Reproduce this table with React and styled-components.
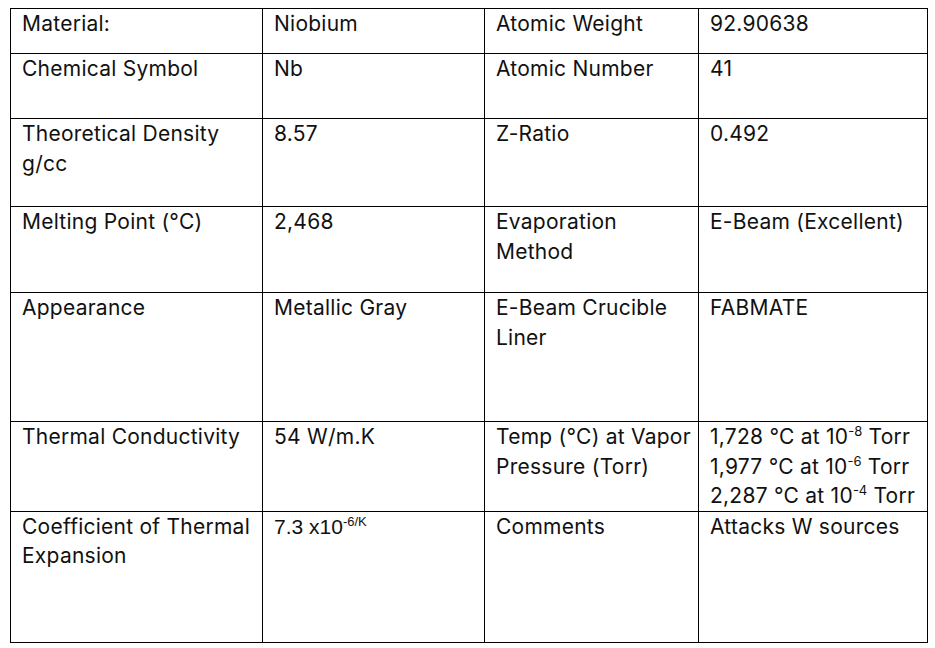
import React from 'react';
import styled, { createGlobalStyle } from 'styled-components';

const GlobalStyle = createGlobalStyle`
  body {
    margin: 0;
    background: #fff;
  }
`;

const Page = styled.div`
  padding: 8px 0 0 10px;
`;

const Table = styled.table`
  border-collapse: collapse;
  table-layout: fixed;
  width: 917px;
  font-family: "Inter", "Noto Sans", sans-serif;
  font-size: 21px;
  letter-spacing: 0.25px;
  line-height: 29.5px;
  color: #111;
`;

const Row = styled.tr`
  height: ${(p) => p.$h}px;
`;

const Cell = styled.td`
  border: 1px solid #000;
  vertical-align: top;
  padding: 0 4px 0 11px;
  overflow: hidden;
`;

const Sup = styled.sup`
  font-size: 13px;
  line-height: 0;
  letter-spacing: 0;
  vertical-align: 8px;
`;

const ArialText = styled.span`
  font-family: "Liberation Sans", Arial, sans-serif;
  font-size: 21px;
  letter-spacing: 0;
`;

function App() {
  return (
    <>
      <GlobalStyle />
      <Page>
        <Table>
          <colgroup>
            <col style={{ width: 252 }} />
            <col style={{ width: 222 }} />
            <col style={{ width: 214 }} />
            <col style={{ width: 229 }} />
          </colgroup>
          <tbody>
            <Row $h={45}>
              <Cell>Material:</Cell>
              <Cell>Niobium</Cell>
              <Cell>Atomic Weight</Cell>
              <Cell>92.90638</Cell>
            </Row>
            <Row $h={65}>
              <Cell>Chemical Symbol</Cell>
              <Cell>Nb</Cell>
              <Cell>Atomic Number</Cell>
              <Cell>41</Cell>
            </Row>
            <Row $h={88}>
              <Cell>Theoretical Density g/cc</Cell>
              <Cell>8.57</Cell>
              <Cell>Z-Ratio</Cell>
              <Cell>0.492</Cell>
            </Row>
            <Row $h={86}>
              <Cell>Melting Point (°C)</Cell>
              <Cell>2,468</Cell>
              <Cell>Evaporation Method</Cell>
              <Cell>E-Beam (Excellent)</Cell>
            </Row>
            <Row $h={129}>
              <Cell>Appearance</Cell>
              <Cell>Metallic Gray</Cell>
              <Cell>E-Beam Crucible Liner</Cell>
              <Cell>FABMATE</Cell>
            </Row>
            <Row $h={88}>
              <Cell>Thermal Conductivity</Cell>
              <Cell>54 W/m.K</Cell>
              <Cell>Temp (°C) at Vapor Pressure (Torr)</Cell>
              <Cell>
                1,728 °C at 10<Sup>-8</Sup> Torr<br />
                1,977 °C at 10<Sup>-6</Sup> Torr<br />
                2,287 °C at 10<Sup>-4</Sup> Torr
              </Cell>
            </Row>
            <Row $h={131}>
              <Cell>Coefficient of Thermal Expansion</Cell>
              <Cell>
                <ArialText>
                  7.3 x10<Sup>-6/K</Sup>
                </ArialText>
              </Cell>
              <Cell>Comments</Cell>
              <Cell>Attacks W sources</Cell>
            </Row>
          </tbody>
        </Table>
      </Page>
    </>
  );
}

export default App;
